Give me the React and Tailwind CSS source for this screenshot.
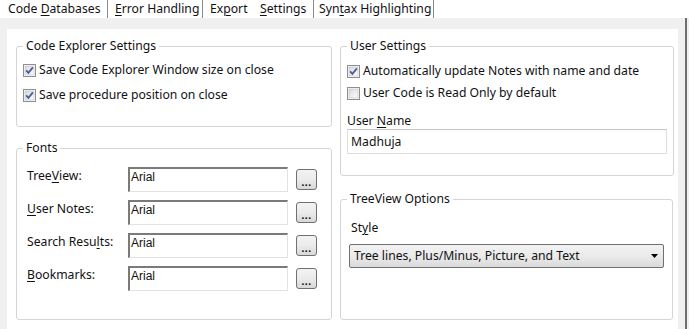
import React from "react";

const ui = { fontFamily: '"Noto Sans", "Open Sans", sans-serif' };

function U({ children }) {
    return <span className="underline underline-offset-[2px] decoration-[1px]">{children}</span>;
}

function Check({ checked }) {
    return (
        <svg width="13" height="13" viewBox="0 0 13 13" className="shrink-0">
            <defs>
                <linearGradient id="cbg" x1="0" y1="0" x2="1" y2="1">
                    <stop offset="0" stopColor="#d9d9d9" />
                    <stop offset="1" stopColor="#ffffff" />
                </linearGradient>
            </defs>
            <rect x="0.5" y="0.5" width="12" height="12" fill="#fff" stroke="#8e8f8f" />
            <rect x="2" y="2" width="9" height="9" fill="url(#cbg)" stroke="#b9bcc0" strokeWidth="0.6" />
            {checked && (
                <path d="M3.2 6.4 L5.4 8.9 L9.9 3.4" fill="none" stroke="#4a5c9a" strokeWidth="1.8" />
            )}
        </svg>
    );
}

function CheckRow({ checked, children }) {
    return (
        <div className="flex items-center gap-[3px] h-[18px]">
            <Check checked={checked} />
            <span>{children}</span>
        </div>
    );
}

function Group({ title, className, children }) {
    return (
        <fieldset className={`border border-[#d5d5d5] rounded-[3px] ${className}`}>
            <legend className="ml-[6px] px-[3px] leading-[16px]">{title}</legend>
            {children}
        </fieldset>
    );
}

function Tab({ className, children }) {
    return (
        <div className={`flex items-center ${className}`}>
            <span className="whitespace-nowrap">{children}</span>
        </div>
    );
}

function FontRow({ label }) {
    return (
        <div className="flex items-start h-[25px]">
            <div className="w-[101px] mt-[1px] leading-[16px]">{label}</div>
            <div
                className="w-[160px] h-[25px] bg-white border-t-2 border-l-2 border-r border-b border-t-[#7a7a7a] border-l-[#7a7a7a] border-r-[#e2e2e2] border-b-[#e2e2e2] pl-[1px] text-[12px] leading-[16px]"
                style={{ fontFamily: '"Liberation Sans", Arial, sans-serif' }}
            >
                Arial
            </div>
            <button className="ml-[8px] mt-[2px] w-[21px] h-[21px] rounded-[3px] border border-[#707070] bg-gradient-to-b from-[#f3f3f3] via-[#ebebeb] to-[#d8d8d8] flex items-end justify-center pb-[4px]">
                <span className="block text-[10px] font-bold leading-[6px] tracking-[0.5px] text-black">...</span>
            </button>
        </div>
    );
}

export default function App() {
    return (
        <div className="w-[689px] h-[329px] bg-white overflow-hidden text-[12.2px] text-[#111]" style={ui}>
            {/* tabs */}
            <div className="h-[18px] flex items-stretch leading-[16px]">
                <Tab className="w-[107px] pl-[8px]">Code <U>D</U>atabases</Tab>
                <div className="w-px bg-[#8a8a8a]" />
                <Tab className="w-[94px] pl-[7px]"><U>E</U>rror Handling</Tab>
                <div className="w-px bg-[#8a8a8a]" />
                <Tab className="w-[50px] pl-[7px]">Ex<U>p</U>ort</Tab>
                <Tab className="w-[60px] pl-[7px]"><U>S</U>ettings</Tab>
                <div className="w-px bg-[#8a8a8a]" />
                <Tab className="w-[119px] pl-[5px]">Syn<U>t</U>ax Highlighting</Tab>
                <div className="w-px bg-[#8a8a8a]" />
            </div>

            <div className="flex h-[311px]">
                <div className="w-[685px] bg-[#f0f0f0] pt-[11px] pl-[7px]">
                    <div className="w-[671px] h-full bg-white flex gap-[8px] pl-[9px] pt-[9px] leading-[16px]">
                        {/* left column */}
                        <div className="w-[316px] flex flex-col">
                            <Group title="Code Explorer Settings" className="h-[89px]">
                                <div className="flex flex-col gap-[7px] pt-[7px] pl-[6px]">
                                    <CheckRow checked>Save Code Explorer Window size on close</CheckRow>
                                    <CheckRow checked>Save procedure position on close</CheckRow>
                                </div>
                            </Group>
                            <Group title="Fonts" className="h-[180px] mt-[13px]">
                                <div className="flex flex-col gap-[8px] pt-[11px] pl-[10px]">
                                    <FontRow label={<>Tree<U>V</U>iew:</>} />
                                    <FontRow label={<><U>U</U>ser Notes:</>} />
                                    <FontRow label={<>Search Resu<U>l</U>ts:</>} />
                                    <FontRow label={<><U>B</U>ookmarks:</>} />
                                </div>
                            </Group>
                        </div>

                        {/* right column */}
                        <div className="w-[333px] flex flex-col">
                            <Group title="User Settings" className="h-[138px]">
                                <div className="pl-[6px] pr-[6px]">
                                    <div className="flex flex-col gap-[4px] pt-[8px]">
                                        <CheckRow checked>Automatically update Notes with name and date</CheckRow>
                                        <CheckRow>User Code is Read Only by default</CheckRow>
                                    </div>
                                    <div className="mt-[11px]">User <U>N</U>ame</div>
                                    <div className="w-[320px] h-[25px] border border-[#dedede] border-t-[#c4c4c4] pl-[3px] flex items-center">
                                        <span>Madhuja</span>
                                    </div>
                                </div>
                            </Group>
                            <Group title="TreeView Options" className="h-[129px] mt-[15px]">
                                <div className="pl-[8px]">
                                    <div className="mt-[13px] ml-[2px]">St<U>y</U>le</div>
                                    <div className="mt-[8px] w-[315px] h-[24px] rounded-[2px] border border-[#707070] bg-gradient-to-b from-[#f2f2f2] via-[#ebebeb] to-[#dadada] flex items-center pl-[4px] pr-[5px]">
                                        <span className="flex-1">Tree lines, Plus/Minus, Picture, and Text</span>
                                        <svg width="7" height="4" viewBox="0 0 7 4">
                                            <path d="M0 0 H7 L3.5 4 Z" fill="#000" />
                                        </svg>
                                    </div>
                                </div>
                            </Group>
                        </div>
                    </div>
                </div>
                <div className="w-[2px] bg-[#6e6e6e]" />
                <div className="w-[2px] bg-[#f0f0f0]" />
            </div>
        </div>
    );
}
